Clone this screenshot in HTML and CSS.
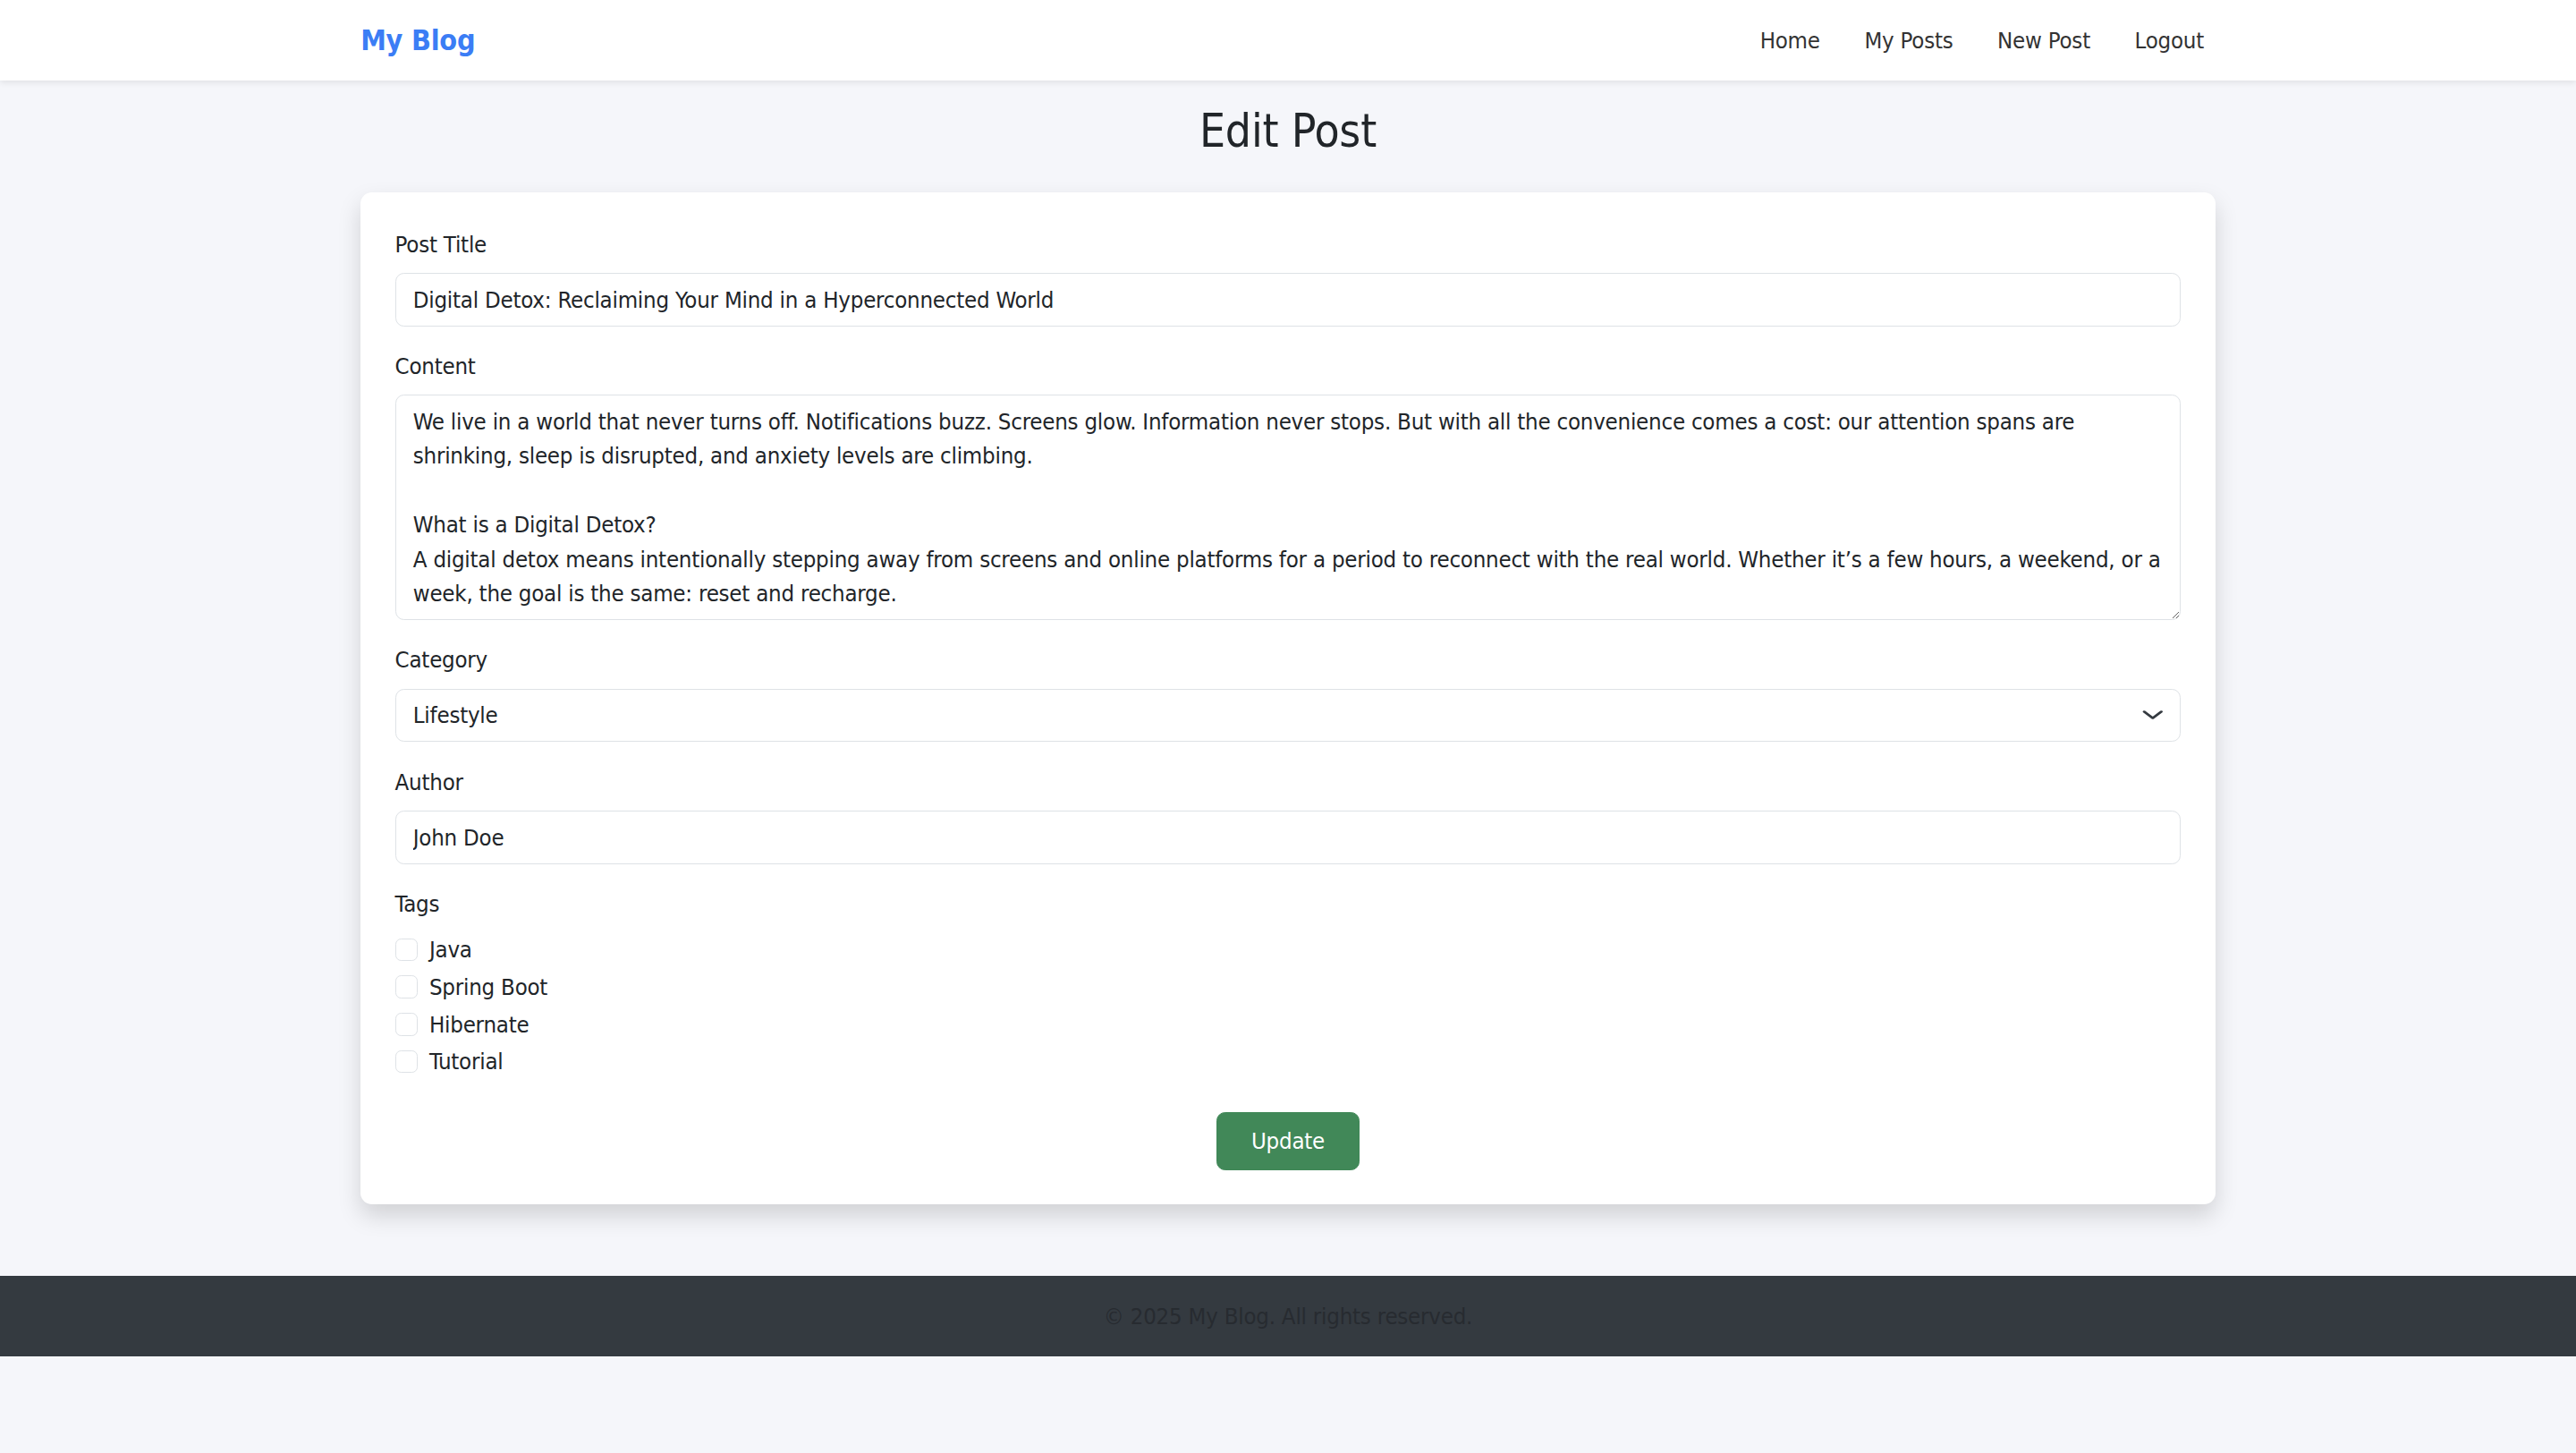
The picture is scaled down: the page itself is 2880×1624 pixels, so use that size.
FILE: index.html
```html
<!DOCTYPE html>
<html lang="en">
<head>
<meta charset="utf-8">
<title>Edit Post</title>
<link rel="stylesheet" href="styles.css">
</head>
<body>
<nav class="navbar">
  <div class="container navbar-inner">
    <a class="brand" href="#">My Blog</a>
    <ul class="nav-links">
      <li><a class="nav-link" href="#">Home</a></li>
      <li><a class="nav-link" href="#">My Posts</a></li>
      <li><a class="nav-link" href="#">New Post</a></li>
      <li><a class="nav-link" href="#">Logout</a></li>
    </ul>
  </div>
</nav>

<main class="container main">
  <h2 class="page-title">Edit Post</h2>
  <div class="card">
    <form class="card-body">
      <div class="field">
        <label class="form-label" for="title">Post Title</label>
        <input class="form-control" id="title" type="text" value="Digital Detox: Reclaiming Your Mind in a Hyperconnected World">
      </div>
      <div class="field">
        <label class="form-label" for="content">Content</label>
        <textarea class="form-control textarea" id="content" rows="6">We live in a world that never turns off. Notifications buzz. Screens glow. Information never stops. But with all the convenience comes a cost: our attention spans are shrinking, sleep is disrupted, and anxiety levels are climbing.

What is a Digital Detox?
A digital detox means intentionally stepping away from screens and online platforms for a period to reconnect with the real world. Whether it’s a few hours, a weekend, or a week, the goal is the same: reset and recharge.</textarea>
      </div>
      <div class="field">
        <label class="form-label" for="category">Category</label>
        <div class="select-wrap">
          <select class="form-select" id="category">
            <option>Technology</option>
            <option selected>Lifestyle</option>
            <option>Travel</option>
          </select>
          <svg class="select-chevron" viewBox="0 0 16 16" width="26" height="19" preserveAspectRatio="none" aria-hidden="true">
            <path d="M2 5l6 6 6-6" fill="none" stroke="#343a40" stroke-width="2" stroke-linecap="round" stroke-linejoin="round"/>
          </svg>
        </div>
      </div>
      <div class="field">
        <label class="form-label" for="author">Author</label>
        <input class="form-control" id="author" type="text" value="John Doe">
      </div>
      <div class="field field-tags">
        <label class="form-label">Tags</label>
        <div class="form-check">
          <input class="form-check-input" type="checkbox" id="tag1">
          <label class="form-check-label" for="tag1">Java</label>
        </div>
        <div class="form-check">
          <input class="form-check-input" type="checkbox" id="tag2">
          <label class="form-check-label" for="tag2">Spring Boot</label>
        </div>
        <div class="form-check">
          <input class="form-check-input" type="checkbox" id="tag3">
          <label class="form-check-label" for="tag3">Hibernate</label>
        </div>
        <div class="form-check">
          <input class="form-check-input" type="checkbox" id="tag4">
          <label class="form-check-label" for="tag4">Tutorial</label>
        </div>
      </div>
      <div class="actions">
        <button class="btn-update" type="submit">Update</button>
      </div>
    </form>
  </div>
</main>

<footer class="footer">
  <p>© 2025 My Blog. All rights reserved.</p>
</footer>
</body>
</html>
```

FILE: styles.css
```css
html {
  font-size: 25.6px;
}

* {
  box-sizing: border-box;
}

body {
  margin: 0;
  background: #f5f6fa;
  color: #212529;
  font-family: "DejaVu Sans Condensed", "DejaVu Sans", sans-serif;
  font-size: 1rem;
  line-height: 1.5;
  letter-spacing: -0.22px;
}

.container {
  max-width: 2112px;
  margin-left: auto;
  margin-right: auto;
  padding-left: 0.75rem;
  padding-right: 0.75rem;
}

/* Navbar */
.navbar {
  background: #ffffff;
  box-shadow: 0 3px 6px rgba(0, 0, 0, 0.075);
  height: 90px;
  display: flex;
  align-items: center;
}

.navbar-inner {
  width: 100%;
  display: flex;
  align-items: center;
  justify-content: space-between;
}

.brand {
  color: #3b7df5;
  font-size: 1.25rem;
  font-weight: 700;
  text-decoration: none;
  line-height: 1.5;
}

.nav-links {
  display: flex;
  gap: 24px;
  list-style: none;
  margin: 0;
  padding: 0;
}

.nav-link {
  display: block;
  padding: 0 0.5rem;
  color: #333333;
  text-decoration: none;
}

/* Main */
.main {
  margin-top: 1rem;
  margin-bottom: 80px;
}

.page-title {
  margin: 0 0 1.5rem;
  text-align: center;
  font-size: 2rem;
  font-weight: 500;
  line-height: 1.2;
  color: #212529;
}

.card {
  background: #ffffff;
  border-radius: 0.5rem;
  box-shadow: 0 0.5rem 1rem rgba(0, 0, 0, 0.15);
}

.card-body {
  padding: 1.5rem;
  margin: 0;
}

.field {
  margin-bottom: 1rem;
}

.form-label {
  display: inline-block;
  margin-bottom: 0.5rem;
}

.form-control,
.form-select {
  display: block;
  width: 100%;
  padding: 0.375rem 0.75rem;
  font-family: inherit;
  font-size: 1rem;
  letter-spacing: inherit;
  line-height: 1.5;
  color: #212529;
  background: #ffffff;
  border: 1px solid #dee2e6;
  border-radius: 0.375rem;
  margin: 0;
  outline: none;
}

.textarea {
  resize: vertical;
  overflow: hidden;
}

.select-wrap {
  position: relative;
}

.form-select {
  appearance: none;
  -webkit-appearance: none;
  padding-right: 2.25rem;
}

.select-chevron {
  position: absolute;
  right: 19px;
  top: 50%;
  width: 25.6px;
  height: 19.2px;
  transform: translateY(-50%);
  pointer-events: none;
}

.field-tags {
  margin-bottom: 37px;
}

.form-check {
  display: block;
  min-height: 1.5rem;
  padding-left: 1.5rem;
  margin-bottom: 0.125rem;
}

.form-check-input {
  appearance: none;
  -webkit-appearance: none;
  float: left;
  font-size: 1rem;
  width: 1rem;
  height: 1rem;
  margin: 0.25rem 0 0 -1.5rem;
  border: 1px solid #dee2e6;
  border-radius: 0.25rem;
  background: #ffffff;
}

.form-check-label {
  display: inline-block;
}

.actions {
  display: flex;
  justify-content: center;
}

.btn-update {
  font-family: inherit;
  font-size: 1rem;
  letter-spacing: inherit;
  line-height: 1.5;
  color: #ffffff;
  background: #418858;
  border: 1px solid #418858;
  border-radius: 0.375rem;
  padding: 12.5px 1.5rem;
  cursor: pointer;
}

/* Footer */
.footer {
  background: #343a40;
  padding: 1rem 0;
  text-align: center;
  color: #272b30;
}

.footer p {
  margin: 0;
}
```
